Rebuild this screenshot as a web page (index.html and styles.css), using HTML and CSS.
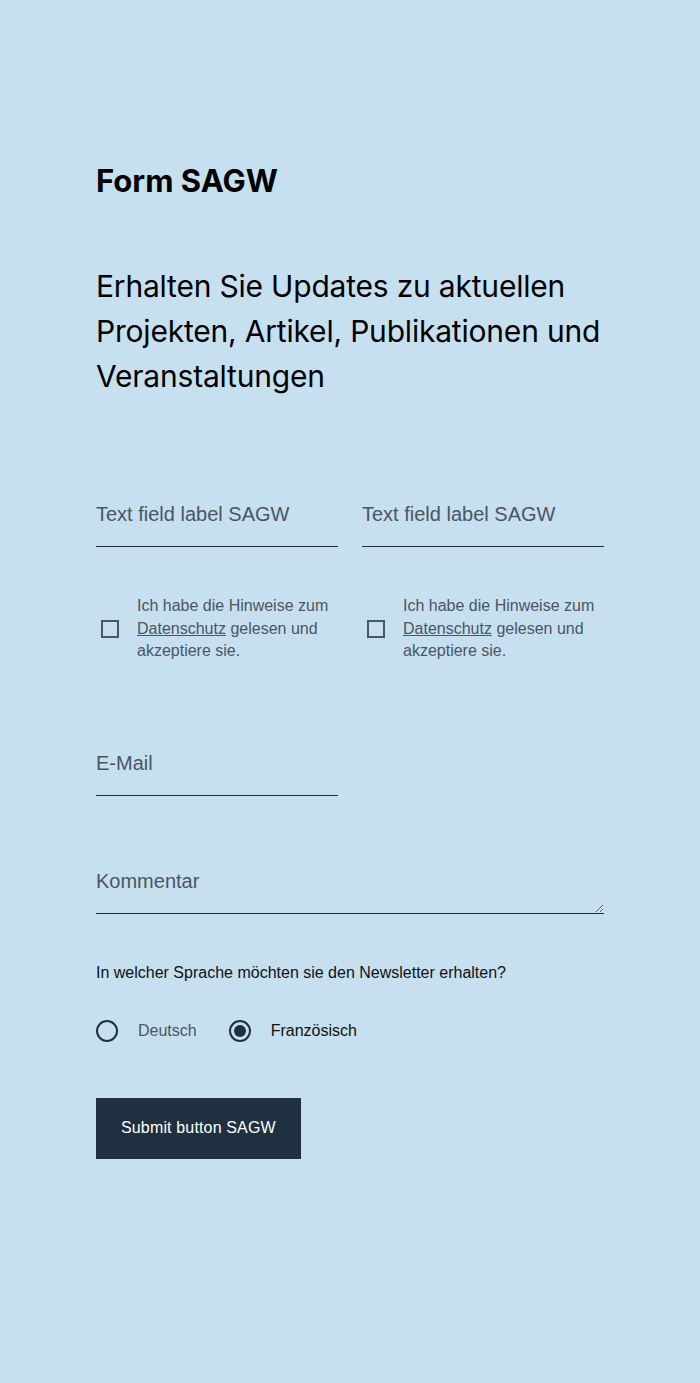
FILE: index.html
```html
<!DOCTYPE html>
<html lang="de">
<head>
<meta charset="utf-8">
<title>Form SAGW</title>
<link rel="stylesheet" href="styles.css">
</head>
<body>
<main class="page">
  <h1 class="title">Form SAGW</h1>
  <p class="lead">Erhalten Sie Updates zu aktuellen Projekten, Artikel, Publikationen und Veranstaltungen</p>

  <form class="form">
    <div class="row two">
      <label class="field">
        <input class="input" type="text" placeholder="Text field label SAGW">
      </label>
      <label class="field">
        <input class="input" type="text" placeholder="Text field label SAGW">
      </label>
    </div>

    <div class="row two checks">
      <label class="check">
        <span class="box"></span>
        <span class="check-text">Ich habe die Hinweise zum <a href="#" class="link">Datenschutz</a> gelesen und akzeptiere sie.</span>
      </label>
      <label class="check">
        <span class="box"></span>
        <span class="check-text">Ich habe die Hinweise zum <a href="#" class="link">Datenschutz</a> gelesen und akzeptiere sie.</span>
      </label>
    </div>

    <div class="row two email-row">
      <label class="field">
        <input class="input" type="email" placeholder="E-Mail">
      </label>
    </div>

    <div class="row comment-row">
      <textarea class="textarea" rows="1" placeholder="Kommentar"></textarea>
    </div>

    <p class="question">In welcher Sprache möchten sie den Newsletter erhalten?</p>

    <div class="radios">
      <label class="radio">
        <span class="circle"></span>
        <span class="radio-text muted">Deutsch</span>
      </label>
      <label class="radio">
        <span class="circle checked"></span>
        <span class="radio-text">Französisch</span>
      </label>
    </div>

    <button type="button" class="submit">Submit button SAGW</button>
  </form>
</main>
</body>
</html>
```

FILE: styles.css
```css
* { box-sizing: border-box; }

html, body {
  margin: 0;
  padding: 0;
  background: #c7e0ef;
}

body {
  font-family: "Liberation Sans", Arial, sans-serif;
  color: #111;
  min-height: 1383px;
}

.page {
  padding: 161px 96px 0 96px;
}

.title {
  font-family: Inter, "Liberation Sans", sans-serif;
  font-weight: 700;
  font-size: 31px;
  line-height: 40px;
  letter-spacing: 0;
  margin: 0;
  color: #000;
}

.lead {
  font-family: Inter, "Liberation Sans", sans-serif;
  font-weight: 400;
  font-size: 30px;
  line-height: 45px;
  letter-spacing: -0.2px;
  margin: 63px 0 0 0;
  color: #000;
}

.form {
  margin-top: 97px;
}

.row.two {
  display: grid;
  grid-template-columns: 1fr 1fr;
  column-gap: 24px;
}

.field { display: block; }

.input,
.textarea {
  display: block;
  width: 100%;
  border: 0;
  border-bottom: 1px solid #1f3040;
  border-radius: 0;
  background: transparent;
  font-family: "Liberation Sans", Arial, sans-serif;
  font-size: 20px;
  color: #111;
  outline: none;
}

.input {
  height: 51px;
  padding: 0 0 13px 0;
}

.input::placeholder,
.textarea::placeholder {
  color: #4b5563;
  opacity: 1;
}

.checks {
  margin-top: 48px;
}

.check {
  display: flex;
  align-items: center;
  gap: 18px;
  padding-left: 5px;
}

.box {
  flex: none;
  width: 18px;
  height: 18px;
  border: 2px solid #4b5563;
}

.check-text {
  font-size: 16px;
  line-height: 22.5px;
  color: #4b5563;
}

.link {
  color: #4b5563;
  text-decoration: underline;
}

.email-row {
  margin-top: 82px;
}

.comment-row {
  margin-top: 61px;
}

.textarea {
  resize: vertical;
  padding: 12px 0 0 0;
  line-height: 24px;
  height: 57px;
}

.question {
  margin: 48px 0 0 0;
  font-size: 16px;
  line-height: 22px;
  color: #111;
}

.radios {
  display: flex;
  align-items: center;
  gap: 32px;
  margin-top: 36px;
}

.radio {
  display: flex;
  align-items: center;
  gap: 20px;
}

.circle {
  width: 22px;
  height: 22px;
  border: 2px solid #1f3040;
  border-radius: 50%;
  display: flex;
  align-items: center;
  justify-content: center;
}

.circle.checked::after {
  content: "";
  width: 12px;
  height: 12px;
  border-radius: 50%;
  background: #1f3040;
}

.radio-text {
  font-size: 16px;
  line-height: 22px;
  color: #111;
}

.radio-text.muted { color: #4b5563; }

.submit {
  display: block;
  margin-top: 56px;
  height: 61px;
  padding: 0 25px;
  border: 0;
  background: #1f3040;
  color: #fff;
  font-family: "Liberation Sans", Arial, sans-serif;
  font-size: 16px;
  letter-spacing: 0.15px;
}
```
